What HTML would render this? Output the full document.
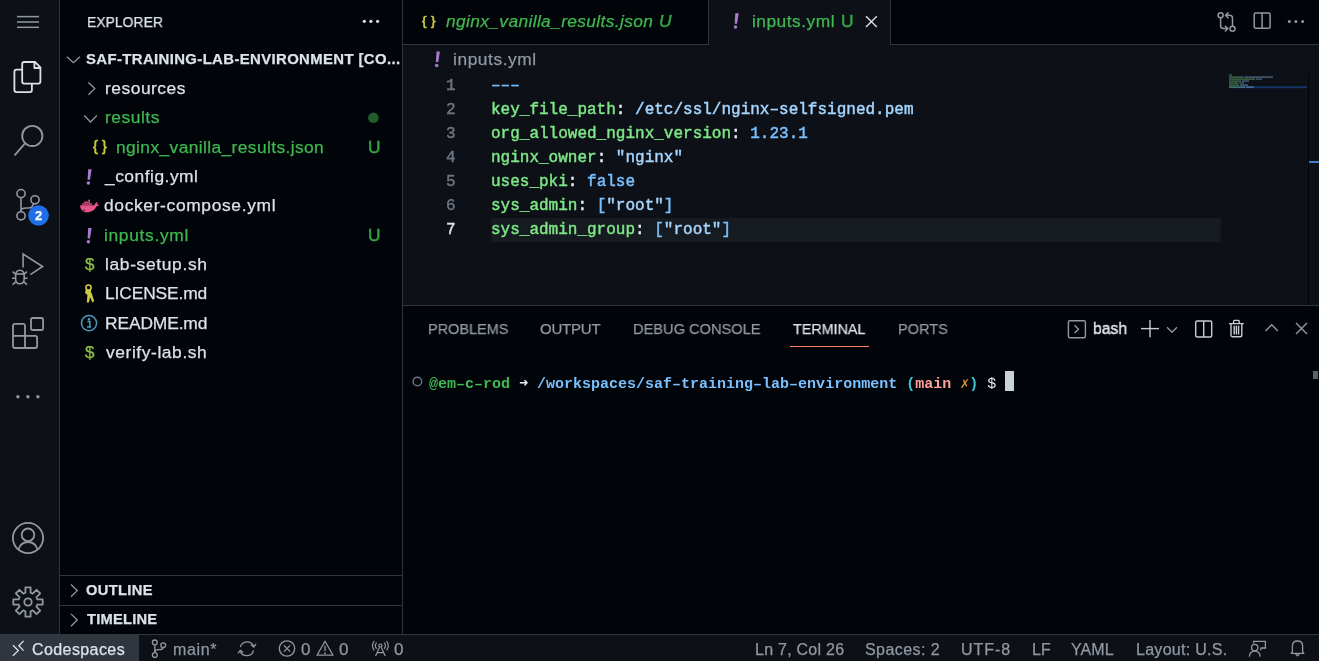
<!DOCTYPE html>
<html><head><meta charset="utf-8"><title>VS Code</title><style>
html,body{margin:0;padding:0;width:1319px;height:661px;overflow:hidden;background:#0d1117}
body{position:relative}
.r{position:absolute}
.t{position:absolute;line-height:1;white-space:pre;font-family:"Liberation Sans",sans-serif;will-change:transform;-webkit-text-stroke:0.25px currentColor}
.m{font-family:"Liberation Mono",monospace;-webkit-text-stroke:0}
svg{position:absolute;overflow:visible}
</style></head><body>
<div class="r" style="left:0px;top:0px;width:59px;height:634px;background:#0d1117;"></div>
<div class="r" style="left:59px;top:0px;width:1px;height:634px;background:#30363d;"></div>
<div class="r" style="left:60px;top:0px;width:342px;height:634px;background:#010409;"></div>
<div class="r" style="left:402px;top:0px;width:1px;height:634px;background:#30363d;"></div>
<div class="r" style="left:60px;top:575px;width:342px;height:1px;background:#30363d;"></div>
<div class="r" style="left:60px;top:605px;width:342px;height:1px;background:#30363d;"></div>
<div class="r" style="left:403px;top:0px;width:916px;height:44px;background:#010409;"></div>
<div class="r" style="left:403px;top:44px;width:306px;height:1px;background:#30363d;"></div>
<div class="r" style="left:890px;top:44px;width:429px;height:1px;background:#30363d;"></div>
<div class="r" style="left:708px;top:0px;width:1px;height:44px;background:#30363d;"></div>
<div class="r" style="left:709px;top:0px;width:181px;height:45px;background:#0d1117;"></div>
<div class="r" style="left:890px;top:0px;width:1px;height:44px;background:#30363d;"></div>
<div class="r" style="left:403px;top:45px;width:916px;height:260px;background:#0d1117;"></div>
<div class="r" style="left:491px;top:218px;width:730px;height:24px;background:#161b22;"></div>
<div class="r" style="left:1308px;top:74px;width:1px;height:231px;background:#010409;"></div>
<div class="r" style="left:1309px;top:161px;width:10px;height:2px;background:#3f7fd0;"></div>
<div class="r" style="left:403px;top:305px;width:916px;height:1px;background:#30363d;"></div>
<div class="r" style="left:403px;top:306px;width:916px;height:328px;background:#010409;"></div>
<div class="r" style="left:790px;top:346px;width:79px;height:1px;background:#f78166;"></div>
<div class="r" style="left:0px;top:634px;width:1319px;height:1px;background:#30363d;"></div>
<div class="r" style="left:0px;top:635px;width:1319px;height:26px;background:#0d1117;"></div>
<div class="r" style="left:0px;top:635px;width:139px;height:26px;background:#30363d;"></div>
<div class="r" style="left:1005px;top:371px;width:9px;height:20px;background:#c9d1d9;"></div>
<div class="r" style="left:1312.5px;top:371px;width:5px;height:8px;background:#5b6169;"></div>
<svg style="left:0;top:0" width="1319" height="661" viewBox="0 0 1319 661" ><g stroke="#9198a1" stroke-width="1.5" fill="none"><line x1="17" y1="16.6" x2="39" y2="16.6"/><line x1="17" y1="22" x2="39" y2="22"/><line x1="17" y1="27.3" x2="39" y2="27.3"/></g><g stroke="#dce2e9" stroke-width="1.8" fill="none" stroke-linejoin="round"><path d="M22.2,64 a2,2 0 0 1 2,-2 H35 L40.4,67.4 V81.6 a2,2 0 0 1 -2,2 H24.2 a2,2 0 0 1 -2,-2 Z"/><path d="M34.4,62.3 V68 H40.2"/><path d="M22.2,69.7 H16.4 a2,2 0 0 0 -2,2 V90.1 a2,2 0 0 0 2,2 H29.9 a2,2 0 0 0 2,-2 V83.6"/></g><g stroke="#9198a1" stroke-width="1.8" fill="none"><circle cx="32.3" cy="135.9" r="10.1"/><line x1="25" y1="143.4" x2="14.6" y2="155.3"/></g><g stroke="#9198a1" stroke-width="1.6" fill="none"><circle cx="21" cy="193.6" r="4.1"/><circle cx="35" cy="199.8" r="4.1"/><circle cx="21" cy="215.8" r="4.1"/><path d="M21,197.7 V211.7"/><path d="M21,211 C21,208.5 23,208 26,208 H28.5 C31,208 33,206.5 33.3,203.5"/></g><circle cx="38.5" cy="215.5" r="10.3" fill="#1f6feb"/><g stroke="#9198a1" stroke-width="1.6" fill="none" stroke-linejoin="miter"><path d="M23.1,267.4 V254 L42.6,266.5 L30.4,274.6"/><path d="M15.6,276 C15.6,272 17.4,270.2 19.8,270.2 C22.2,270.2 24.2,272 24.2,276 V278.5 C24.2,282 22.4,283.8 19.8,283.8 C17.2,283.8 15.6,282 15.6,278.5 Z"/><path d="M15.6,274 H24.2"/><path d="M12.6,271.6 L15.8,274.4 M12,278.2 H15.6 M12.6,284.6 L15.8,281.8 M27,271.6 L23.8,274.4 M27.6,278.2 H24 M27,284.6 L23.8,281.8"/></g><g stroke="#9198a1" stroke-width="1.8" fill="none" stroke-linejoin="round"><rect x="31" y="318" width="12.1" height="12" rx="1.8"/><path d="M13,325.8 a2,2 0 0 1 2,-2 H23 a2,2 0 0 1 2,2 V335.9 H35.1 a2,2 0 0 1 2,2 V346 a2,2 0 0 1 -2,2 H15 a2,2 0 0 1 -2,-2 Z"/><path d="M13,335.9 H25 V348"/></g><g fill="#9198a1"><circle cx="17.9" cy="396.8" r="1.7"/><circle cx="27.9" cy="396.8" r="1.7"/><circle cx="37.9" cy="396.8" r="1.7"/></g><g stroke="#9198a1" stroke-width="1.8" fill="none"><circle cx="28" cy="538" r="15.1"/><circle cx="28" cy="534.8" r="6.3"/><path d="M18.6,549.2 C20,544.5 23.5,542 28,542 C32.5,542 36,544.5 37.4,549.2"/></g><g stroke="#9198a1" stroke-width="1.8" fill="none" stroke-linejoin="round"><path d="M25.43,592.75 L25.41,587.33 L30.59,587.33 L30.57,592.75 L32.73,593.64 L36.55,589.79 L40.21,593.45 L36.36,597.27 L37.25,599.43 L42.67,599.41 L42.67,604.59 L37.25,604.57 L36.36,606.73 L40.21,610.55 L36.55,614.21 L32.73,610.36 L30.57,611.25 L30.59,616.67 L25.41,616.67 L25.43,611.25 L23.27,610.36 L19.45,614.21 L15.79,610.55 L19.64,606.73 L18.75,604.57 L13.33,604.59 L13.33,599.41 L18.75,599.43 L19.64,597.27 L15.79,593.45 L19.45,589.79 L23.27,593.64 Z"/><circle cx="28" cy="602" r="3.7"/></g><g fill="#dce2e9"><circle cx="364.3" cy="21.3" r="1.6"/><circle cx="370.9" cy="21.3" r="1.6"/><circle cx="377.6" cy="21.3" r="1.6"/></g><g stroke="#9198a1" stroke-width="1.3" fill="none"><path d="M66.8,56.7 L73.4,62.7 L79.9,56.7"/><path d="M88.4,82.5 L94.8,88.6 L88.4,94.8"/><path d="M84.2,115.5 L90.5,122 L96.9,115.5"/><path d="M71,584.5 L77.2,590.6 L71,596.8"/><path d="M71,613.9 L77.2,620 L71,626.2"/></g><circle cx="373.4" cy="117.7" r="5.3" fill="#1f5d2b"/><g stroke="#dce2e9" stroke-width="1.4"><line x1="866" y1="16.2" x2="876.8" y2="27"/><line x1="876.8" y1="16.2" x2="866" y2="27"/></g><g stroke="#9198a1" stroke-width="1.5" fill="none"><circle cx="1220.6" cy="15.2" r="2.5"/><circle cx="1232.5" cy="28.8" r="2.5"/><path d="M1220.6,17.7 V25.8 C1220.6,27.8 1221.6,28.6 1223.6,28.6 H1227.8 M1224.9,25.7 L1227.8,28.6 L1224.9,31.5"/><path d="M1232.5,26.3 V18.2 C1232.5,16.2 1231.5,15.3 1229.5,15.3 H1225.6 M1228.5,12.4 L1225.6,15.3 L1228.5,18.2"/><rect x="1254.2" y="12.9" width="15.9" height="15.3" rx="1.5"/><line x1="1262.1" y1="13" x2="1262.1" y2="28"/></g><g fill="#9198a1"><circle cx="1289.3" cy="21.4" r="1.5"/><circle cx="1295.9" cy="21.4" r="1.5"/><circle cx="1302.6" cy="21.4" r="1.5"/></g><g stroke="#9198a1" stroke-width="1.4" fill="none"><rect x="1068.4" y="320.7" width="17" height="17" rx="1.5"/><path d="M1074.5,325.3 L1078.5,329.2 L1074.5,333.1"/><path d="M1167,327.3 L1172,332.2 L1177,327.3"/><path d="M1265.5,331 L1271.7,324.8 L1277.9,331"/><line x1="1296" y1="323" x2="1307" y2="334"/><line x1="1307" y1="323" x2="1296" y2="334"/></g><g stroke="#c6cdd5" stroke-width="1.4" fill="none"><line x1="1141" y1="328.6" x2="1159" y2="328.6"/><line x1="1150" y1="319.9" x2="1150" y2="337.3"/><rect x="1195.7" y="321" width="16" height="16" rx="1.5"/><line x1="1203.7" y1="321" x2="1203.7" y2="337"/><path d="M1229,323.6 H1243.8 M1233.6,323.6 V321.2 a0.8,0.8 0 0 1 0.8,-0.8 H1238.4 a0.8,0.8 0 0 1 0.8,0.8 V323.6 M1231,323.6 V335 a1.8,1.8 0 0 0 1.8,1.8 H1240 a1.8,1.8 0 0 0 1.8,-1.8 V323.6 M1234.2,325.8 V334.4 M1236.4,325.8 V334.4 M1238.6,325.8 V334.4"/></g><circle cx="417.4" cy="381.5" r="4.3" stroke="#6e7681" stroke-width="1.4" fill="none"/></svg>
<svg style="left:0;top:0" width="1319" height="661" viewBox="0 0 1319 661" ><path d="M88.19999999999999,169.3 L91.6,169.3 L90.0,179.8 L87.6,179.8 Z" fill="#a97bd0"/><circle cx="88.39999999999999" cy="183.10000000000002" r="1.75" fill="#a97bd0"/><path d="M88.19999999999999,227.97000000000003 L91.6,227.97000000000003 L90.0,238.47000000000003 L87.6,238.47000000000003 Z" fill="#a97bd0"/><circle cx="88.39999999999999" cy="241.77000000000004" r="1.75" fill="#a97bd0"/><path d="M735.3000000000001,13.2 L738.7,13.2 L737.1,23.7 L734.7,23.7 Z" fill="#a97bd0"/><circle cx="735.5" cy="27.0" r="1.75" fill="#a97bd0"/><path d="M436.5,51.6 L439.9,51.6 L438.29999999999995,62.1 L435.9,62.1 Z" fill="#a97bd0"/><circle cx="436.7" cy="65.4" r="1.75" fill="#a97bd0"/><circle cx="89" cy="323.1" r="7.6" stroke="#519aba" stroke-width="1.5" fill="none"/><circle cx="89" cy="319.3" r="1.2" fill="#519aba"/><path d="M87.3,321.5 H89.9 V327 H90.9 M86.9,327 H91.1" stroke="#519aba" stroke-width="1.5" fill="none"/><g fill="#e8538a"><path d="M80,205.2 H94.4 C95,203.6 96,202.4 97,202 C97.4,203 97.6,203.8 97.4,204.6 C98.2,204.6 98.8,204.8 99,205.2 C98.2,206 97.2,206.2 96.4,206.2 C95,209.8 92,212.2 86.8,212.2 C83,212.2 80.4,210 80,205.2 Z"/><rect x="82.2" y="203.3" width="1.7" height="1.6"/><rect x="84.2" y="203.3" width="1.7" height="1.6"/><rect x="86.2" y="203.3" width="1.7" height="1.6"/><rect x="88.2" y="203.3" width="1.7" height="1.6"/><rect x="90.2" y="203.3" width="1.7" height="1.6"/><rect x="84.2" y="201.5" width="1.7" height="1.6"/><rect x="86.2" y="201.5" width="1.7" height="1.6"/><rect x="88.2" y="201.5" width="1.7" height="1.6"/><rect x="88.2" y="199.7" width="1.7" height="1.6"/></g><circle cx="84" cy="210.2" r="0.8" fill="#010409"/><g fill="none" stroke="#cbcb41" stroke-width="1.6"><circle cx="88.5" cy="287.6" r="2.6"/></g><g fill="#cbcb41"><path d="M85.6,290 H91.2 L90.6,294 L89,302.6 H86.8 L87.4,295 L85,293 Z"/><path d="M88.6,292 L91.6,293 L94.2,301.2 L92.4,302.6 L89.6,296 Z"/></g><g stroke="#dce2e9" stroke-width="1.3" fill="none"><path d="M12.9,645.3 L18.3,650.6 L12.9,655.8"/><path d="M23.6,640.9 L18.9,645.8 L23.6,650.6"/></g><g stroke="#9198a1" stroke-width="1.3" fill="none"><circle cx="154.8" cy="642.4" r="2.4"/><circle cx="163.2" cy="645.2" r="2.4"/><circle cx="154.8" cy="655.1" r="2.4"/><path d="M154.8,644.8 V652.7"/><path d="M154.8,652 C154.8,650 156,649.6 158,649.6 H159.5 C161.5,649.6 163,649 163.2,647.6"/></g><g stroke="#9198a1" stroke-width="1.3" fill="none"><path d="M240.3,647.2 A7,7 0 0 1 253.6,646.2"/><path d="M253.6,650.4 A7,7 0 0 1 240.3,651.2"/><path d="M251,644.8 L253.8,647 L256,644"/><path d="M243,652.4 L240.2,650.4 L238,653.4"/></g><g stroke="#9198a1" stroke-width="1.3" fill="none"><circle cx="287" cy="648.5" r="7.7"/><path d="M283.9,645.4 L290.1,651.6 M290.1,645.4 L283.9,651.6"/></g><g stroke="#9198a1" stroke-width="1.3" fill="none" stroke-linejoin="round"><path d="M325,641.2 L333,655.2 H317 Z"/><path d="M325,645.8 V651"/></g><circle cx="325" cy="653.2" r="0.9" fill="#9198a1"/><g stroke="#9198a1" stroke-width="1.2" fill="none"><circle cx="380.4" cy="645.6" r="1.6"/><path d="M379.4,647.5 L375.6,656 M381.4,647.5 L385.2,656 M377.4,652.6 H383.4"/><path d="M376.6,642.6 A5,5 0 0 0 376.6,648.8 M384.2,642.6 A5,5 0 0 1 384.2,648.8"/><path d="M374.2,641 A8,8 0 0 0 374.2,650.4 M386.6,641 A8,8 0 0 1 386.6,650.4"/></g><g stroke="#9198a1" stroke-width="1.3" fill="none"><path d="M1253.6,643.2 V641.4 H1265.4 V648 H1261.2 L1260.4,650.4"/><circle cx="1254.7" cy="647.6" r="3.2"/><path d="M1249.4,656.8 C1249.6,653 1251.8,651.2 1254.8,651.2 C1257.8,651.2 1260,653 1260.2,656.8"/></g><g stroke="#9198a1" stroke-width="1.3" fill="none" stroke-linejoin="round"><path d="M1291.2,653.4 H1303.8 L1302.6,651.8 V646 C1302.6,642.6 1300.4,641 1297.5,641 C1294.6,641 1292.4,642.6 1292.4,646 V651.8 Z"/><path d="M1295.6,654 L1297.4,655.8 L1299.2,654"/></g><rect x="1229" y="86.2" width="78" height="2" fill="#1f6feb" opacity="0.38"/><rect x="1229" y="74.4" width="1" height="1.4" fill="#79c0ff" opacity="0.42"/><rect x="1230" y="74.4" width="1" height="1.4" fill="#79c0ff" opacity="0.42"/><rect x="1231" y="74.4" width="1" height="1.4" fill="#79c0ff" opacity="0.42"/><rect x="1229" y="76.4" width="1" height="1.4" fill="#7ee787" opacity="0.42"/><rect x="1230" y="76.4" width="1" height="1.4" fill="#7ee787" opacity="0.42"/><rect x="1231" y="76.4" width="1" height="1.4" fill="#7ee787" opacity="0.42"/><rect x="1232" y="76.4" width="1" height="1.4" fill="#7ee787" opacity="0.42"/><rect x="1233" y="76.4" width="1" height="1.4" fill="#7ee787" opacity="0.42"/><rect x="1234" y="76.4" width="1" height="1.4" fill="#7ee787" opacity="0.42"/><rect x="1235" y="76.4" width="1" height="1.4" fill="#7ee787" opacity="0.42"/><rect x="1236" y="76.4" width="1" height="1.4" fill="#7ee787" opacity="0.42"/><rect x="1237" y="76.4" width="1" height="1.4" fill="#7ee787" opacity="0.42"/><rect x="1238" y="76.4" width="1" height="1.4" fill="#7ee787" opacity="0.42"/><rect x="1239" y="76.4" width="1" height="1.4" fill="#7ee787" opacity="0.42"/><rect x="1240" y="76.4" width="1" height="1.4" fill="#7ee787" opacity="0.42"/><rect x="1241" y="76.4" width="1" height="1.4" fill="#7ee787" opacity="0.42"/><rect x="1242" y="76.4" width="1" height="1.4" fill="#e6edf3" opacity="0.42"/><rect x="1244" y="76.4" width="1" height="1.4" fill="#a5d6ff" opacity="0.42"/><rect x="1245" y="76.4" width="1" height="1.4" fill="#a5d6ff" opacity="0.42"/><rect x="1246" y="76.4" width="1" height="1.4" fill="#a5d6ff" opacity="0.42"/><rect x="1247" y="76.4" width="1" height="1.4" fill="#a5d6ff" opacity="0.42"/><rect x="1248" y="76.4" width="1" height="1.4" fill="#a5d6ff" opacity="0.42"/><rect x="1249" y="76.4" width="1" height="1.4" fill="#a5d6ff" opacity="0.42"/><rect x="1250" y="76.4" width="1" height="1.4" fill="#a5d6ff" opacity="0.42"/><rect x="1251" y="76.4" width="1" height="1.4" fill="#a5d6ff" opacity="0.42"/><rect x="1252" y="76.4" width="1" height="1.4" fill="#a5d6ff" opacity="0.42"/><rect x="1253" y="76.4" width="1" height="1.4" fill="#a5d6ff" opacity="0.42"/><rect x="1254" y="76.4" width="1" height="1.4" fill="#a5d6ff" opacity="0.42"/><rect x="1255" y="76.4" width="1" height="1.4" fill="#a5d6ff" opacity="0.42"/><rect x="1256" y="76.4" width="1" height="1.4" fill="#a5d6ff" opacity="0.42"/><rect x="1257" y="76.4" width="1" height="1.4" fill="#a5d6ff" opacity="0.42"/><rect x="1258" y="76.4" width="1" height="1.4" fill="#a5d6ff" opacity="0.42"/><rect x="1259" y="76.4" width="1" height="1.4" fill="#a5d6ff" opacity="0.42"/><rect x="1260" y="76.4" width="1" height="1.4" fill="#a5d6ff" opacity="0.42"/><rect x="1261" y="76.4" width="1" height="1.4" fill="#a5d6ff" opacity="0.42"/><rect x="1262" y="76.4" width="1" height="1.4" fill="#a5d6ff" opacity="0.42"/><rect x="1263" y="76.4" width="1" height="1.4" fill="#a5d6ff" opacity="0.42"/><rect x="1264" y="76.4" width="1" height="1.4" fill="#a5d6ff" opacity="0.42"/><rect x="1265" y="76.4" width="1" height="1.4" fill="#a5d6ff" opacity="0.42"/><rect x="1266" y="76.4" width="1" height="1.4" fill="#a5d6ff" opacity="0.42"/><rect x="1267" y="76.4" width="1" height="1.4" fill="#a5d6ff" opacity="0.42"/><rect x="1268" y="76.4" width="1" height="1.4" fill="#a5d6ff" opacity="0.42"/><rect x="1269" y="76.4" width="1" height="1.4" fill="#a5d6ff" opacity="0.42"/><rect x="1270" y="76.4" width="1" height="1.4" fill="#a5d6ff" opacity="0.42"/><rect x="1271" y="76.4" width="1" height="1.4" fill="#a5d6ff" opacity="0.42"/><rect x="1272" y="76.4" width="1" height="1.4" fill="#a5d6ff" opacity="0.42"/><rect x="1229" y="78.4" width="1" height="1.4" fill="#7ee787" opacity="0.42"/><rect x="1230" y="78.4" width="1" height="1.4" fill="#7ee787" opacity="0.42"/><rect x="1231" y="78.4" width="1" height="1.4" fill="#7ee787" opacity="0.42"/><rect x="1232" y="78.4" width="1" height="1.4" fill="#7ee787" opacity="0.42"/><rect x="1233" y="78.4" width="1" height="1.4" fill="#7ee787" opacity="0.42"/><rect x="1234" y="78.4" width="1" height="1.4" fill="#7ee787" opacity="0.42"/><rect x="1235" y="78.4" width="1" height="1.4" fill="#7ee787" opacity="0.42"/><rect x="1236" y="78.4" width="1" height="1.4" fill="#7ee787" opacity="0.42"/><rect x="1237" y="78.4" width="1" height="1.4" fill="#7ee787" opacity="0.42"/><rect x="1238" y="78.4" width="1" height="1.4" fill="#7ee787" opacity="0.42"/><rect x="1239" y="78.4" width="1" height="1.4" fill="#7ee787" opacity="0.42"/><rect x="1240" y="78.4" width="1" height="1.4" fill="#7ee787" opacity="0.42"/><rect x="1241" y="78.4" width="1" height="1.4" fill="#7ee787" opacity="0.42"/><rect x="1242" y="78.4" width="1" height="1.4" fill="#7ee787" opacity="0.42"/><rect x="1243" y="78.4" width="1" height="1.4" fill="#7ee787" opacity="0.42"/><rect x="1244" y="78.4" width="1" height="1.4" fill="#7ee787" opacity="0.42"/><rect x="1245" y="78.4" width="1" height="1.4" fill="#7ee787" opacity="0.42"/><rect x="1246" y="78.4" width="1" height="1.4" fill="#7ee787" opacity="0.42"/><rect x="1247" y="78.4" width="1" height="1.4" fill="#7ee787" opacity="0.42"/><rect x="1248" y="78.4" width="1" height="1.4" fill="#7ee787" opacity="0.42"/><rect x="1249" y="78.4" width="1" height="1.4" fill="#7ee787" opacity="0.42"/><rect x="1250" y="78.4" width="1" height="1.4" fill="#7ee787" opacity="0.42"/><rect x="1251" y="78.4" width="1" height="1.4" fill="#7ee787" opacity="0.42"/><rect x="1252" y="78.4" width="1" height="1.4" fill="#7ee787" opacity="0.42"/><rect x="1253" y="78.4" width="1" height="1.4" fill="#7ee787" opacity="0.42"/><rect x="1254" y="78.4" width="1" height="1.4" fill="#e6edf3" opacity="0.42"/><rect x="1256" y="78.4" width="1" height="1.4" fill="#79c0ff" opacity="0.42"/><rect x="1257" y="78.4" width="1" height="1.4" fill="#79c0ff" opacity="0.42"/><rect x="1258" y="78.4" width="1" height="1.4" fill="#79c0ff" opacity="0.42"/><rect x="1259" y="78.4" width="1" height="1.4" fill="#79c0ff" opacity="0.42"/><rect x="1260" y="78.4" width="1" height="1.4" fill="#79c0ff" opacity="0.42"/><rect x="1261" y="78.4" width="1" height="1.4" fill="#79c0ff" opacity="0.42"/><rect x="1229" y="80.4" width="1" height="1.4" fill="#7ee787" opacity="0.42"/><rect x="1230" y="80.4" width="1" height="1.4" fill="#7ee787" opacity="0.42"/><rect x="1231" y="80.4" width="1" height="1.4" fill="#7ee787" opacity="0.42"/><rect x="1232" y="80.4" width="1" height="1.4" fill="#7ee787" opacity="0.42"/><rect x="1233" y="80.4" width="1" height="1.4" fill="#7ee787" opacity="0.42"/><rect x="1234" y="80.4" width="1" height="1.4" fill="#7ee787" opacity="0.42"/><rect x="1235" y="80.4" width="1" height="1.4" fill="#7ee787" opacity="0.42"/><rect x="1236" y="80.4" width="1" height="1.4" fill="#7ee787" opacity="0.42"/><rect x="1237" y="80.4" width="1" height="1.4" fill="#7ee787" opacity="0.42"/><rect x="1238" y="80.4" width="1" height="1.4" fill="#7ee787" opacity="0.42"/><rect x="1239" y="80.4" width="1" height="1.4" fill="#7ee787" opacity="0.42"/><rect x="1240" y="80.4" width="1" height="1.4" fill="#e6edf3" opacity="0.42"/><rect x="1242" y="80.4" width="1" height="1.4" fill="#a5d6ff" opacity="0.42"/><rect x="1243" y="80.4" width="1" height="1.4" fill="#a5d6ff" opacity="0.42"/><rect x="1244" y="80.4" width="1" height="1.4" fill="#a5d6ff" opacity="0.42"/><rect x="1245" y="80.4" width="1" height="1.4" fill="#a5d6ff" opacity="0.42"/><rect x="1246" y="80.4" width="1" height="1.4" fill="#a5d6ff" opacity="0.42"/><rect x="1247" y="80.4" width="1" height="1.4" fill="#a5d6ff" opacity="0.42"/><rect x="1248" y="80.4" width="1" height="1.4" fill="#a5d6ff" opacity="0.42"/><rect x="1229" y="82.4" width="1" height="1.4" fill="#7ee787" opacity="0.42"/><rect x="1230" y="82.4" width="1" height="1.4" fill="#7ee787" opacity="0.42"/><rect x="1231" y="82.4" width="1" height="1.4" fill="#7ee787" opacity="0.42"/><rect x="1232" y="82.4" width="1" height="1.4" fill="#7ee787" opacity="0.42"/><rect x="1233" y="82.4" width="1" height="1.4" fill="#7ee787" opacity="0.42"/><rect x="1234" y="82.4" width="1" height="1.4" fill="#7ee787" opacity="0.42"/><rect x="1235" y="82.4" width="1" height="1.4" fill="#7ee787" opacity="0.42"/><rect x="1236" y="82.4" width="1" height="1.4" fill="#7ee787" opacity="0.42"/><rect x="1237" y="82.4" width="1" height="1.4" fill="#e6edf3" opacity="0.42"/><rect x="1239" y="82.4" width="1" height="1.4" fill="#79c0ff" opacity="0.42"/><rect x="1240" y="82.4" width="1" height="1.4" fill="#79c0ff" opacity="0.42"/><rect x="1241" y="82.4" width="1" height="1.4" fill="#79c0ff" opacity="0.42"/><rect x="1242" y="82.4" width="1" height="1.4" fill="#79c0ff" opacity="0.42"/><rect x="1243" y="82.4" width="1" height="1.4" fill="#79c0ff" opacity="0.42"/><rect x="1229" y="84.4" width="1" height="1.4" fill="#7ee787" opacity="0.42"/><rect x="1230" y="84.4" width="1" height="1.4" fill="#7ee787" opacity="0.42"/><rect x="1231" y="84.4" width="1" height="1.4" fill="#7ee787" opacity="0.42"/><rect x="1232" y="84.4" width="1" height="1.4" fill="#7ee787" opacity="0.42"/><rect x="1233" y="84.4" width="1" height="1.4" fill="#7ee787" opacity="0.42"/><rect x="1234" y="84.4" width="1" height="1.4" fill="#7ee787" opacity="0.42"/><rect x="1235" y="84.4" width="1" height="1.4" fill="#7ee787" opacity="0.42"/><rect x="1236" y="84.4" width="1" height="1.4" fill="#7ee787" opacity="0.42"/><rect x="1237" y="84.4" width="1" height="1.4" fill="#7ee787" opacity="0.42"/><rect x="1238" y="84.4" width="1" height="1.4" fill="#e6edf3" opacity="0.42"/><rect x="1240" y="84.4" width="1" height="1.4" fill="#79c0ff" opacity="0.42"/><rect x="1241" y="84.4" width="1" height="1.4" fill="#a5d6ff" opacity="0.42"/><rect x="1242" y="84.4" width="1" height="1.4" fill="#a5d6ff" opacity="0.42"/><rect x="1243" y="84.4" width="1" height="1.4" fill="#a5d6ff" opacity="0.42"/><rect x="1244" y="84.4" width="1" height="1.4" fill="#a5d6ff" opacity="0.42"/><rect x="1245" y="84.4" width="1" height="1.4" fill="#a5d6ff" opacity="0.42"/><rect x="1246" y="84.4" width="1" height="1.4" fill="#a5d6ff" opacity="0.42"/><rect x="1247" y="84.4" width="1" height="1.4" fill="#79c0ff" opacity="0.42"/><rect x="1229" y="86.4" width="1" height="1.4" fill="#7ee787" opacity="0.42"/><rect x="1230" y="86.4" width="1" height="1.4" fill="#7ee787" opacity="0.42"/><rect x="1231" y="86.4" width="1" height="1.4" fill="#7ee787" opacity="0.42"/><rect x="1232" y="86.4" width="1" height="1.4" fill="#7ee787" opacity="0.42"/><rect x="1233" y="86.4" width="1" height="1.4" fill="#7ee787" opacity="0.42"/><rect x="1234" y="86.4" width="1" height="1.4" fill="#7ee787" opacity="0.42"/><rect x="1235" y="86.4" width="1" height="1.4" fill="#7ee787" opacity="0.42"/><rect x="1236" y="86.4" width="1" height="1.4" fill="#7ee787" opacity="0.42"/><rect x="1237" y="86.4" width="1" height="1.4" fill="#7ee787" opacity="0.42"/><rect x="1238" y="86.4" width="1" height="1.4" fill="#7ee787" opacity="0.42"/><rect x="1239" y="86.4" width="1" height="1.4" fill="#7ee787" opacity="0.42"/><rect x="1240" y="86.4" width="1" height="1.4" fill="#7ee787" opacity="0.42"/><rect x="1241" y="86.4" width="1" height="1.4" fill="#7ee787" opacity="0.42"/><rect x="1242" y="86.4" width="1" height="1.4" fill="#7ee787" opacity="0.42"/><rect x="1243" y="86.4" width="1" height="1.4" fill="#7ee787" opacity="0.42"/><rect x="1244" y="86.4" width="1" height="1.4" fill="#e6edf3" opacity="0.42"/><rect x="1246" y="86.4" width="1" height="1.4" fill="#79c0ff" opacity="0.42"/><rect x="1247" y="86.4" width="1" height="1.4" fill="#a5d6ff" opacity="0.42"/><rect x="1248" y="86.4" width="1" height="1.4" fill="#a5d6ff" opacity="0.42"/><rect x="1249" y="86.4" width="1" height="1.4" fill="#a5d6ff" opacity="0.42"/><rect x="1250" y="86.4" width="1" height="1.4" fill="#a5d6ff" opacity="0.42"/><rect x="1251" y="86.4" width="1" height="1.4" fill="#a5d6ff" opacity="0.42"/><rect x="1252" y="86.4" width="1" height="1.4" fill="#a5d6ff" opacity="0.42"/><rect x="1253" y="86.4" width="1" height="1.4" fill="#79c0ff" opacity="0.42"/></svg>
<div class="t m" style="left:491px;top:78.24px;font-size:16px;font-weight:400;-webkit-text-stroke:0.45px currentColor;letter-spacing:0.000px"><span style="color:#79c0ff">–––</span></div>
<div class="t m" style="left:446.0px;top:78.24px;font-size:16px;font-weight:400;-webkit-text-stroke:0.4px currentColor;color:#6e7681">1</div>
<div class="t m" style="left:491px;top:102.24px;font-size:16px;font-weight:400;-webkit-text-stroke:0.45px currentColor;letter-spacing:0.000px"><span style="color:#7ee787">key_file_path</span><span style="color:#e6edf3">:</span><span style="color:#a5d6ff"> /etc/ssl/nginx–selfsigned.pem</span></div>
<div class="t m" style="left:446.0px;top:102.24px;font-size:16px;font-weight:400;-webkit-text-stroke:0.4px currentColor;color:#6e7681">2</div>
<div class="t m" style="left:491px;top:126.24px;font-size:16px;font-weight:400;-webkit-text-stroke:0.45px currentColor;letter-spacing:0.000px"><span style="color:#7ee787">org_allowed_nginx_version</span><span style="color:#e6edf3">:</span><span style="color:#e6edf3"> </span><span style="color:#79c0ff">1.23.1</span></div>
<div class="t m" style="left:446.0px;top:126.24px;font-size:16px;font-weight:400;-webkit-text-stroke:0.4px currentColor;color:#6e7681">3</div>
<div class="t m" style="left:491px;top:150.24px;font-size:16px;font-weight:400;-webkit-text-stroke:0.45px currentColor;letter-spacing:0.000px"><span style="color:#7ee787">nginx_owner</span><span style="color:#e6edf3">:</span><span style="color:#e6edf3"> </span><span style="color:#a5d6ff">"nginx"</span></div>
<div class="t m" style="left:446.0px;top:150.24px;font-size:16px;font-weight:400;-webkit-text-stroke:0.4px currentColor;color:#6e7681">4</div>
<div class="t m" style="left:491px;top:174.24px;font-size:16px;font-weight:400;-webkit-text-stroke:0.45px currentColor;letter-spacing:0.000px"><span style="color:#7ee787">uses_pki</span><span style="color:#e6edf3">:</span><span style="color:#e6edf3"> </span><span style="color:#79c0ff">false</span></div>
<div class="t m" style="left:446.0px;top:174.24px;font-size:16px;font-weight:400;-webkit-text-stroke:0.4px currentColor;color:#6e7681">5</div>
<div class="t m" style="left:491px;top:198.24px;font-size:16px;font-weight:400;-webkit-text-stroke:0.45px currentColor;letter-spacing:0.000px"><span style="color:#7ee787">sys_admin</span><span style="color:#e6edf3">:</span><span style="color:#e6edf3"> </span><span style="color:#79c0ff">[</span><span style="color:#a5d6ff">"root"</span><span style="color:#79c0ff">]</span></div>
<div class="t m" style="left:446.0px;top:198.24px;font-size:16px;font-weight:400;-webkit-text-stroke:0.4px currentColor;color:#6e7681">6</div>
<div class="t m" style="left:491px;top:222.24px;font-size:16px;font-weight:400;-webkit-text-stroke:0.45px currentColor;letter-spacing:0.000px"><span style="color:#7ee787">sys_admin_group</span><span style="color:#e6edf3">:</span><span style="color:#e6edf3"> </span><span style="color:#79c0ff">[</span><span style="color:#a5d6ff">"root"</span><span style="color:#79c0ff">]</span></div>
<div class="t m" style="left:446.0px;top:222.24px;font-size:16px;font-weight:400;-webkit-text-stroke:0.4px currentColor;color:#dce2e9">7</div>
<div class="t m" style="left:429px;top:377.10px;font-size:15px"><span style="color:#3fb950;font-weight:700">@em–c–rod</span><span style="color:#e6edf3;font-weight:400"> </span><span style="color:#e6edf3;font-weight:700">➜</span><span style="color:#e6edf3;font-weight:400"> </span><span style="color:#79c0ff;font-weight:700">/workspaces/saf–training–lab–environment</span><span style="color:#e6edf3;font-weight:400"> </span><span style="color:#39c5cf;font-weight:700">(</span><span style="color:#ffa198;font-weight:700">main</span><span style="color:#e6edf3;font-weight:400"> </span><span style="color:#d29922;font-weight:700">✗</span><span style="color:#39c5cf;font-weight:700">)</span><span style="color:#e6edf3;font-weight:400"> $ </span></div>
<div class="t " style="left:86.69px;top:13.61px;font-size:15.4px;font-weight:400;font-style:normal;color:#dce2e9;letter-spacing:0.000px;transform:scaleX(0.9061);transform-origin:0 0;">EXPLORER</div>
<div class="t " style="left:86.00px;top:52.04px;font-size:14.9px;font-weight:700;font-style:normal;color:#dce2e9;letter-spacing:0.382px;">SAF-TRAINING-LAB-ENVIRONMENT [CO...</div>
<div class="t " style="left:104.60px;top:80.11px;font-size:17.4px;font-weight:400;font-style:normal;color:#dce2e9;letter-spacing:0.512px;">resources</div>
<div class="t " style="left:104.90px;top:109.44px;font-size:17.4px;font-weight:400;font-style:normal;color:#3fb950;letter-spacing:0.517px;">results</div>
<div class="t " style="left:116.00px;top:138.77px;font-size:17.4px;font-weight:400;font-style:normal;color:#3fb950;letter-spacing:0.384px;">nginx_vanilla_results.json</div>
<div class="t " style="left:105.30px;top:168.10px;font-size:17.4px;font-weight:400;font-style:normal;color:#dce2e9;letter-spacing:0.500px;">_config.yml</div>
<div class="t " style="left:104.30px;top:197.43px;font-size:17.4px;font-weight:400;font-style:normal;color:#dce2e9;letter-spacing:0.653px;">docker-compose.yml</div>
<div class="t " style="left:104.30px;top:226.76px;font-size:17.4px;font-weight:400;font-style:normal;color:#3fb950;letter-spacing:0.667px;">inputs.yml</div>
<div class="t " style="left:104.90px;top:256.09px;font-size:17.4px;font-weight:400;font-style:normal;color:#dce2e9;letter-spacing:0.655px;">lab-setup.sh</div>
<div class="t " style="left:105.20px;top:285.42px;font-size:17.4px;font-weight:400;font-style:normal;color:#dce2e9;letter-spacing:-0.133px;">LICENSE.md</div>
<div class="t " style="left:105.00px;top:314.75px;font-size:17.4px;font-weight:400;font-style:normal;color:#dce2e9;letter-spacing:-0.125px;">README.md</div>
<div class="t " style="left:106.00px;top:344.08px;font-size:17.4px;font-weight:400;font-style:normal;color:#dce2e9;letter-spacing:0.583px;">verify-lab.sh</div>
<div class="t " style="left:367.70px;top:138.63px;font-size:17.33px;font-weight:400;font-style:normal;color:#34a447;letter-spacing:0.000px;-webkit-text-stroke:0.5px currentColor">U</div>
<div class="t " style="left:367.70px;top:226.62px;font-size:17.33px;font-weight:400;font-style:normal;color:#34a447;letter-spacing:0.000px;-webkit-text-stroke:0.5px currentColor">U</div>
<div class="t " style="left:86.30px;top:583.33px;font-size:14.67px;font-weight:700;font-style:normal;color:#dce2e9;letter-spacing:0.367px;">OUTLINE</div>
<div class="t " style="left:87.30px;top:612.43px;font-size:14.67px;font-weight:700;font-style:normal;color:#dce2e9;letter-spacing:0.243px;">TIMELINE</div>
<div class="t " style="left:446.40px;top:13.17px;font-size:17.33px;font-weight:400;font-style:italic;color:#3fb950;letter-spacing:0.380px;">nginx_vanilla_results.json</div>
<div class="t " style="left:659.00px;top:13.17px;font-size:17.33px;font-weight:400;font-style:italic;color:#34a447;letter-spacing:0.000px;-webkit-text-stroke:0.5px currentColor">U</div>
<div class="t " style="left:751.90px;top:13.17px;font-size:17.33px;font-weight:400;font-style:normal;color:#3fb950;letter-spacing:0.500px;">inputs.yml</div>
<div class="t " style="left:840.80px;top:13.17px;font-size:17.33px;font-weight:400;font-style:normal;color:#34a447;letter-spacing:0.000px;-webkit-text-stroke:0.5px currentColor">U</div>
<div class="t " style="left:452.80px;top:50.97px;font-size:17.33px;font-weight:400;font-style:normal;color:#9198a1;letter-spacing:0.578px;">inputs.yml</div>
<div class="t " style="left:428.23px;top:320.95px;font-size:15px;font-weight:400;font-style:normal;color:#9198a1;letter-spacing:0.000px;transform:scaleX(0.9659);transform-origin:0 0;">PROBLEMS</div>
<div class="t " style="left:540.30px;top:320.95px;font-size:15px;font-weight:400;font-style:normal;color:#9198a1;letter-spacing:-0.200px;">OUTPUT</div>
<div class="t " style="left:633.22px;top:320.95px;font-size:15px;font-weight:400;font-style:normal;color:#9198a1;letter-spacing:0.000px;transform:scaleX(0.9752);transform-origin:0 0;">DEBUG CONSOLE</div>
<div class="t " style="left:793.20px;top:320.95px;font-size:15px;font-weight:400;font-style:normal;color:#dce2e9;letter-spacing:0.000px;transform:scaleX(0.9539);transform-origin:0 0;">TERMINAL</div>
<div class="t " style="left:898.03px;top:320.95px;font-size:15px;font-weight:400;font-style:normal;color:#9198a1;letter-spacing:0.000px;transform:scaleX(0.9680);transform-origin:0 0;">PORTS</div>
<div class="t " style="left:1092.79px;top:320.27px;font-size:17.33px;font-weight:400;font-style:normal;color:#dce2e9;letter-spacing:0.000px;transform:scaleX(0.9056);transform-origin:0 0;-webkit-text-stroke:0.5px currentColor">bash</div>
<div class="t " style="left:32.30px;top:641.60px;font-size:16px;font-weight:400;font-style:normal;color:#dce2e9;letter-spacing:0.411px;">Codespaces</div>
<div class="t " style="left:172.50px;top:641.60px;font-size:16px;font-weight:400;font-style:normal;color:#9198a1;letter-spacing:0.625px;">main*</div>
<div class="t " style="left:301.20px;top:640.95px;font-size:17px;font-weight:400;font-style:normal;color:#9198a1;letter-spacing:0.000px;">0</div>
<div class="t " style="left:339.40px;top:640.95px;font-size:17px;font-weight:400;font-style:normal;color:#9198a1;letter-spacing:0.000px;">0</div>
<div class="t " style="left:393.80px;top:640.95px;font-size:17px;font-weight:400;font-style:normal;color:#9198a1;letter-spacing:0.000px;">0</div>
<div class="t " style="left:755.40px;top:641.60px;font-size:16px;font-weight:400;font-style:normal;color:#9198a1;letter-spacing:0.255px;">Ln 7, Col 26</div>
<div class="t " style="left:865.20px;top:641.60px;font-size:16px;font-weight:400;font-style:normal;color:#9198a1;letter-spacing:0.438px;">Spaces: 2</div>
<div class="t " style="left:960.70px;top:641.60px;font-size:16px;font-weight:400;font-style:normal;color:#9198a1;letter-spacing:0.950px;">UTF-8</div>
<div class="t " style="left:1031.50px;top:641.60px;font-size:16px;font-weight:400;font-style:normal;color:#9198a1;letter-spacing:0.000px;">LF</div>
<div class="t " style="left:1071.20px;top:641.60px;font-size:16px;font-weight:400;font-style:normal;color:#9198a1;letter-spacing:0.067px;">YAML</div>
<div class="t " style="left:1135.80px;top:641.60px;font-size:16px;font-weight:400;font-style:normal;color:#9198a1;letter-spacing:0.282px;">Layout: U.S.</div>
<div class="t " style="left:421.80px;top:13.64px;font-size:13.6px;font-weight:400;font-style:normal;color:#cbcb41;letter-spacing:0.000px;-webkit-text-stroke:0.6px currentColor">{</div>
<div class="t " style="left:430.90px;top:13.64px;font-size:13.6px;font-weight:400;font-style:normal;color:#cbcb41;letter-spacing:0.000px;-webkit-text-stroke:0.6px currentColor">}</div>
<div class="t " style="left:92.70px;top:138.68px;font-size:14.5px;font-weight:400;font-style:normal;color:#cbcb41;letter-spacing:0.000px;-webkit-text-stroke:0.6px currentColor">{</div>
<div class="t " style="left:102.00px;top:138.68px;font-size:14.5px;font-weight:400;font-style:normal;color:#cbcb41;letter-spacing:0.000px;-webkit-text-stroke:0.6px currentColor">}</div>
<div class="t " style="left:85.10px;top:256.45px;font-size:17px;font-weight:400;font-style:normal;color:#8dc149;letter-spacing:0.000px;">$</div>
<div class="t " style="left:85.10px;top:344.45px;font-size:17px;font-weight:400;font-style:normal;color:#8dc149;letter-spacing:0.000px;">$</div>
<div class="t " style="left:35.10px;top:208.95px;font-size:13px;font-weight:700;font-style:normal;color:#ffffff;letter-spacing:0.000px;">2</div>
</body></html>
